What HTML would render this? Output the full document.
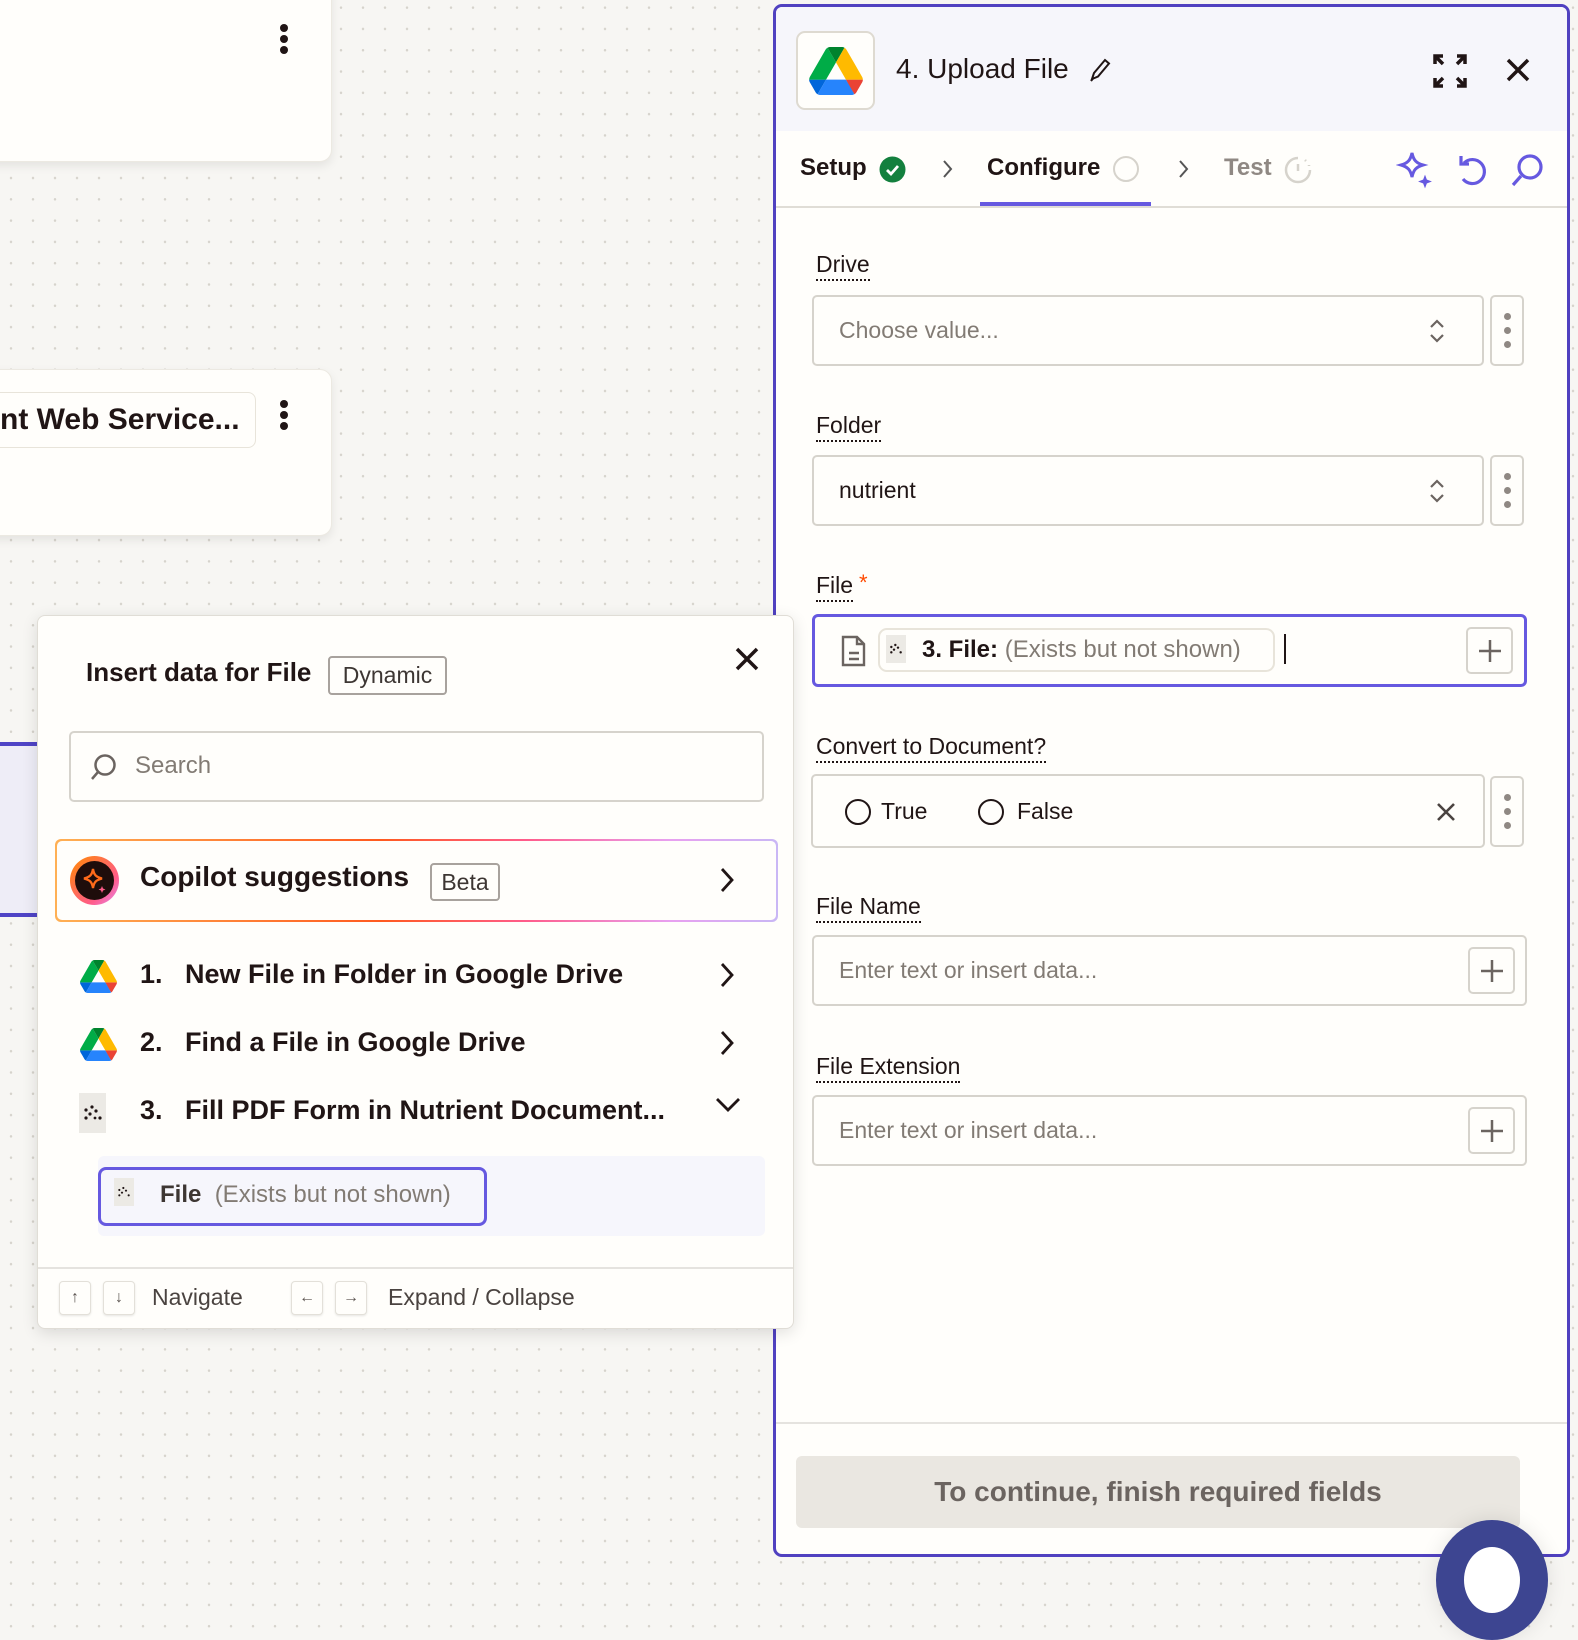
<!DOCTYPE html>
<html><head><meta charset="utf-8"><style>
*{box-sizing:border-box;margin:0;padding:0}
body{width:1578px;height:1586px;overflow:hidden;position:relative;font-family:"Liberation Sans",sans-serif;color:#201515;
background-color:#f7f6f3;background-image:radial-gradient(circle,#d6d3cc 1.1px,transparent 1.4px);background-size:22px 21.3px;background-position:0 -3px}
.a{position:absolute}
.card{position:absolute;background:#fffefb;border-radius:12px;box-shadow:0 4px 10px rgba(0,0,0,.08);border:1px solid #ece9e2}
.vdots{position:absolute;width:8px}
.vdots i{display:block;width:8px;height:8px;border-radius:50%;background:#201515;margin-bottom:3px}
.lbl{position:absolute;left:816px;font-size:23px;color:#201515;border-bottom:2px dotted #201515;line-height:27px;padding-bottom:1px}
.inp{position:absolute;left:816px;border:2px solid #d6d3cc;border-radius:5px;background:#fffefb;font-size:23px}
.ph{color:#827b74}
.kb{position:absolute;width:32px;height:34px;border:1.5px solid #e3e0d9;border-radius:4px;background:#fffefb;font-size:16px;text-align:center;line-height:32px;color:#5b5450;box-shadow:0 1px 2px rgba(0,0,0,.1)}
.mdots{position:absolute;width:34px;height:70px;border:2px solid #d6d3cc;border-radius:5px;background:#fffefb}
.mdots i{position:absolute;left:12px;width:7px;height:7px;border-radius:50%;background:#8f8883}
.plus{position:absolute;width:47px;height:47px;border:2px solid #d6d3cc;border-radius:5px;background:#fffefb}
.nut{display:inline-block;background:#eceae5;position:absolute}
</style></head><body>

<!-- canvas cards -->
<div class="card" style="left:-20px;top:-20px;width:352px;height:182px"></div>
<div class="vdots" style="left:280px;top:24px"><i></i><i></i><i></i></div>
<div class="card" style="left:-20px;top:369px;width:352px;height:167px"></div>
<div class="a" style="left:-40px;top:392px;width:296px;height:56px;border:1.5px solid #e8e4da;border-radius:8px;background:#fffefb"></div>
<div class="a" style="left:0;top:403px;font-size:30px;font-weight:bold;white-space:nowrap">nt Web Service...</div>
<div class="vdots" style="left:280px;top:400px"><i></i><i></i><i></i></div>
<div class="a" style="left:-20px;top:742px;width:70px;height:175px;border:4px solid #4f44c6;background:#eeedf7"></div>

<!-- right panel -->
<div class="a" style="left:773px;top:4px;width:797px;height:1553px;border:3.5px solid #5041c0;border-radius:9px;background:#fffefb;overflow:hidden">
 <div class="a" style="left:0;top:0;width:100%;height:124px;background:#f6f6fb"></div>
 <div class="a" style="left:20px;top:24px;width:79px;height:79px;border:2px solid #dedad1;border-radius:9px;background:#fffefb"></div>
 <svg class="a" style="left:33px;top:40px" width="54" height="48" viewBox="0 0 87.3 78"><path d="m6.6 66.85 3.85 6.65c.8 1.4 1.95 2.5 3.3 3.3l13.75-23.8h-27.5c0 1.550.4 3.1 1.2 4.5z" fill="#0066da"/><path d="m43.65 25-13.75-23.8c-1.35.8-2.5 1.9-3.3 3.3l-25.4 44a9.06 9.06 0 0 0 -1.2 4.5h27.5z" fill="#00ac47"/><path d="m73.55 76.8c1.35-.8 2.5-1.9 3.3-3.3l1.6-2.75 7.650-13.25c.8-1.4 1.2-2.95 1.2-4.5h-27.502l5.852 11.5z" fill="#ea4335"/><path d="m43.65 25 13.75-23.8c-1.35-.8-2.9-1.2-4.5-1.2h-18.5c-1.6 0-3.15.45-4.5 1.2z" fill="#00832d"/><path d="m59.8 53h-32.3l-13.75 23.8c1.35.8 2.9 1.2 4.5 1.2h50.8c1.6 0 3.15-.45 4.5-1.2z" fill="#2684fc"/><path d="m73.4 26.5-12.7-22c-.8-1.4-1.95-2.5-3.3-3.3l-13.75 23.8 16.15 28h27.45c0-1.55-.4-3.1-1.2-4.5z" fill="#ffba00"/></svg>
 <div class="a" style="left:120px;top:46px;font-size:28px">4. Upload File</div>
 <svg class="a" style="left:312px;top:50px" width="24" height="26" viewBox="0 0 24 26" fill="none" stroke="#201515" stroke-width="2"><path d="M4 22 6 16 17 3 21 6.5 10 19.5Z"/><path d="M5 21.5 3 24"/></svg>
 <svg class="a" style="left:656px;top:46px" width="36" height="36" viewBox="0 0 36 36" fill="none" stroke="#201515" stroke-width="3.5"><path d="M3 11V3h8M3 3l8 8M33 11V3h-8M33 3l-8 8M3 25v8h8M3 33l8-8M33 25v8h-8M33 33l-8-8"/></svg>
 <svg class="a" style="left:729px;top:50px" width="26" height="26" viewBox="0 0 26 26" stroke="#201515" stroke-width="3.5"><path d="M3 3 23 23M23 3 3 23"/></svg>

 <div class="a" style="left:24px;top:147px;font-size:24px;font-weight:bold">Setup</div>
 <svg class="a" style="left:103px;top:149px" width="27" height="27" viewBox="0 0 27 27"><circle cx="13.5" cy="13.5" r="13" fill="#13803e"/><path d="M8 14l4 4 7-8" stroke="#fff" stroke-width="2.8" fill="none"/></svg>
 <svg class="a" style="left:166px;top:152px" width="12" height="20" viewBox="0 0 12 20" fill="none" stroke="#555" stroke-width="2"><path d="M2 2l7 8-7 8"/></svg>
 <div class="a" style="left:211px;top:147px;font-size:24px;font-weight:bold">Configure</div>
 <div class="a" style="left:337px;top:149px;width:26px;height:26px;border:2.5px solid #d6d3cc;border-radius:50%"></div>
 <svg class="a" style="left:402px;top:152px" width="12" height="20" viewBox="0 0 12 20" fill="none" stroke="#555" stroke-width="2"><path d="M2 2l7 8-7 8"/></svg>
 <div class="a" style="left:448px;top:147px;font-size:24px;font-weight:bold;color:#8f8883">Test</div>
 <svg class="a" style="left:508px;top:149px" width="28" height="28" viewBox="0 0 28 28" fill="none" stroke="#d6d3cc" stroke-width="2.5"><path d="M14 2a12 12 0 1 0 12 12"/><path d="M14 8v7"/><path d="M21 4l1 1M25 9l0 1"/></svg>
 <div class="a" style="left:204px;top:195px;width:171px;height:4px;background:#6659e0"></div>
 <div class="a" style="left:0;top:199px;width:100%;height:2px;background:#e0ddd6"></div>
 <svg class="a" style="left:620px;top:143px" width="40" height="40" viewBox="0 0 40 40" fill="none" stroke="#6659e0" stroke-width="3"><path d="M16 3c1.5 7 4 10 11 12-7 2-9.5 5-11 12-1.5-7-4-10-11-12 7-2 9.5-5 11-12z"/><path d="M29 26l1.5 4 4 1.5-4 1.5-1.5 4-1.5-4-4-1.5 4-1.5z" fill="#6659e0" stroke-width="1"/></svg>
 <svg class="a" style="left:679px;top:145px" width="34" height="36" viewBox="0 0 34 36" fill="none" stroke="#6659e0" stroke-width="3.2"><path d="M9 11A12 12 0 1 1 8 27"/><path d="M3 4v8h8" transform="translate(3,0)"/></svg>
 <svg class="a" style="left:733px;top:146px" width="36" height="36" viewBox="0 0 36 36" fill="none" stroke="#6659e0" stroke-width="3.2"><circle cx="21" cy="14" r="11"/><path d="M12 23 4 32"/></svg>

 <div class="a" style="left:0;top:1415px;width:100%;height:2px;background:#e5e3df"></div>
 <div class="a" style="left:20px;top:1449px;width:724px;height:72px;background:#eae7e1;border-radius:6px;text-align:center;line-height:72px;font-size:28px;font-weight:bold;color:#6b6460">To continue, finish required fields</div>
</div>

<!-- form -->
<div class="lbl" style="top:251px">Drive</div>
<div class="inp" style="left:812px;top:295px;width:672px;height:71px"><span class="ph a" style="left:25px;top:20px">Choose value...</span>
<svg class="a" style="left:614px;top:20px" width="18" height="28" viewBox="0 0 18 28" fill="none" stroke="#6b6460" stroke-width="2.2"><path d="M3 10l6-6 6 6M3 18l6 6 6-6"/></svg></div>
<div class="mdots" style="left:1490px;top:295px;height:71px"><i style="top:16px"></i><i style="top:30px"></i><i style="top:44px"></i></div>

<div class="lbl" style="top:412px">Folder</div>
<div class="inp" style="left:812px;top:455px;width:672px;height:71px"><span class="a" style="left:25px;top:20px">nutrient</span>
<svg class="a" style="left:614px;top:20px" width="18" height="28" viewBox="0 0 18 28" fill="none" stroke="#6b6460" stroke-width="2.2"><path d="M3 10l6-6 6 6M3 18l6 6 6-6"/></svg></div>
<div class="mdots" style="left:1490px;top:455px;height:71px"><i style="top:16px"></i><i style="top:30px"></i><i style="top:44px"></i></div>

<div class="lbl" style="top:572px">File</div><div class="a" style="left:859px;top:570px;color:#ff4a00;font-size:22px">*</div>
<div class="a" style="left:812px;top:614px;width:715px;height:73px;border:3.5px solid #6659e0;border-radius:6px;background:#fffefb">
 <svg class="a" style="left:26px;top:18px" width="26" height="32" viewBox="0 0 26 32" fill="none" stroke="#6b6460" stroke-width="2.4"><path d="M2 2h14l7 7v21H2z"/><path d="M16 2v7h7M8 18h10M8 24h10"/></svg>
 <div class="a" style="left:63px;top:11px;width:397px;height:44px;border:2px solid #e8e4da;border-radius:9px;background:#fffefb"></div>
 <div class="nut" style="left:71px;top:18px;width:20px;height:28px"></div>
 <svg class="a" style="left:74px;top:26px" width="14" height="12" viewBox="0 0 20 18" fill="#201515"><circle cx="3" cy="6" r="1.8"/><circle cx="9" cy="3" r="1.8"/><circle cx="7" cy="10" r="1.8"/><circle cx="13" cy="7" r="1.8"/><circle cx="3" cy="14" r="1.8"/><circle cx="17" cy="14" r="1.8"/></svg>
 <div class="a" style="left:107px;top:19px;font-size:24px"><b>3. File:</b> <span style="color:#827b74">(Exists but not shown)</span></div>
 <div class="a" style="left:469px;top:17px;width:2px;height:30px;background:#201515"></div>
 <div class="plus" style="left:651px;top:10px"></div>
 <svg class="a" style="left:662px;top:21px" width="26" height="26" viewBox="0 0 26 26" stroke="#6b6460" stroke-width="2.5"><path d="M13 2v22M2 13h22"/></svg>
</div>

<div class="lbl" style="top:733px">Convert to Document?</div>
<div class="inp" style="left:811px;top:774px;width:674px;height:74px">
 <div class="a" style="left:32px;top:23px;width:26px;height:26px;border:2.5px solid #201515;border-radius:50%"></div>
 <span class="a" style="left:68px;top:22px">True</span>
 <div class="a" style="left:165px;top:23px;width:26px;height:26px;border:2.5px solid #201515;border-radius:50%"></div>
 <span class="a" style="left:204px;top:22px">False</span>
 <svg class="a" style="left:623px;top:26px" width="20" height="20" viewBox="0 0 20 20" stroke="#4a4340" stroke-width="2.6"><path d="M2 2l16 16M18 2 2 18"/></svg>
</div>
<div class="mdots" style="left:1490px;top:776px;height:71px"><i style="top:16px"></i><i style="top:30px"></i><i style="top:44px"></i></div>

<div class="lbl" style="top:893px">File Name</div>
<div class="inp" style="left:812px;top:935px;width:715px;height:71px"><span class="ph a" style="left:25px;top:20px">Enter text or insert data...</span>
<div class="plus" style="left:654px;top:10px"></div>
<svg class="a" style="left:665px;top:21px" width="26" height="26" viewBox="0 0 26 26" stroke="#6b6460" stroke-width="2.5"><path d="M13 2v22M2 13h22"/></svg></div>

<div class="lbl" style="top:1053px">File Extension</div>
<div class="inp" style="left:812px;top:1095px;width:715px;height:71px"><span class="ph a" style="left:25px;top:20px">Enter text or insert data...</span>
<div class="plus" style="left:654px;top:10px"></div>
<svg class="a" style="left:665px;top:21px" width="26" height="26" viewBox="0 0 26 26" stroke="#6b6460" stroke-width="2.5"><path d="M13 2v22M2 13h22"/></svg></div>

<!-- bottom right circle -->
<div class="a" style="left:1436px;top:1520px;width:112px;height:120px;border-radius:50%;background:#3d4591;box-shadow:0 0 20px rgba(0,0,0,.1)"></div>
<div class="a" style="left:1464px;top:1547px;width:56px;height:66px;border-radius:50%;background:#fff"></div>

<!-- popup -->
<div class="a" style="left:37px;top:615px;width:757px;height:714px;background:#fffefb;border:1.5px solid #e0ddd6;border-radius:8px;box-shadow:0 4px 16px rgba(0,0,0,.12)">
 <div class="a" style="left:48px;top:41px;font-size:26px;font-weight:bold;color:#201515">Insert data for File</div>
 <div class="a" style="left:290px;top:40px;width:119px;height:39px;border:2px solid #a8a29d;border-radius:4px;font-size:23px;line-height:35px;text-align:center;color:#3d3633">Dynamic</div>
 <svg class="a" style="left:697px;top:31px" width="24" height="24" viewBox="0 0 24 24" stroke="#201515" stroke-width="3.5"><path d="M2 2l20 20M22 2 2 22"/></svg>
 <div class="a" style="left:31px;top:115px;width:695px;height:71px;border:2px solid #d6d3cc;border-radius:5px"></div>
 <svg class="a" style="left:50px;top:137px" width="30" height="30" viewBox="0 0 30 30" fill="none" stroke="#6b6460" stroke-width="2.5"><circle cx="17" cy="12" r="9.5"/><path d="M10 19 4 26"/></svg>
 <div class="a" style="left:97px;top:136px;font-size:24px;color:#827b74">Search</div>

 <div class="a" style="left:17px;top:223px;width:723px;height:83px;border-radius:6px;padding:2px;background:linear-gradient(90deg,#ffb054,#ff5a1f 45%,#ff5c8a 65%,#e8a0f0 85%,#c9b7f5)">
  <div style="width:100%;height:100%;background:#fffefb;border-radius:5px"></div></div>
 <div class="a" style="left:32px;top:240px;width:49px;height:49px;border-radius:50%;background:linear-gradient(135deg,#ff8a00,#ff5c8a 70%,#e38cf3)"></div>
 <div class="a" style="left:37px;top:245px;width:39px;height:39px;border-radius:50%;background:#1e0d0b"></div>
 <svg class="a" style="left:42px;top:250px" width="30" height="30" viewBox="0 0 30 30" fill="none" stroke="#ff6a1a" stroke-width="2.3"><path d="M13 3c1 6 3 8 9 9.5-6 1.5-8 3.5-9 9.5-1-6-3-8-9-9.5 6-1.5 8-3.5 9-9.5z"/><path d="M22 20l1 2.5 2.5 1-2.5 1-1 2.5-1-2.5-2.5-1 2.5-1z" fill="#ff5c8a" stroke="none"/></svg>
 <div class="a" style="left:102px;top:245px;font-size:28px;font-weight:bold;color:#201515">Copilot suggestions</div>
 <div class="a" style="left:392px;top:247px;width:70px;height:38px;border:2px solid #a8a29d;border-radius:4px;font-size:23px;line-height:34px;text-align:center;color:#3d3633">Beta</div>
 <svg class="a" style="left:681px;top:250px" width="16" height="28" viewBox="0 0 16 28" fill="none" stroke="#201515" stroke-width="2.8"><path d="M3 3l10 11-10 11"/></svg>

 <svg class="a" style="left:42px;top:344px" width="37" height="33" viewBox="0 0 87.3 78"><path d="m6.6 66.85 3.85 6.65c.8 1.4 1.95 2.5 3.3 3.3l13.75-23.8h-27.5c0 1.55.4 3.1 1.2 4.5z" fill="#0066da"/><path d="m43.65 25-13.75-23.8c-1.35.8-2.5 1.9-3.3 3.3l-25.4 44a9.06 9.06 0 0 0 -1.2 4.5h27.5z" fill="#00ac47"/><path d="m73.55 76.8c1.35-.8 2.5-1.9 3.3-3.3l1.6-2.75 7.65-13.25c.8-1.4 1.2-2.95 1.2-4.5h-27.502l5.852 11.5z" fill="#ea4335"/><path d="m43.65 25 13.75-23.8c-1.35-.8-2.9-1.2-4.5-1.2h-18.5c-1.6 0-3.15.45-4.5 1.2z" fill="#00832d"/><path d="m59.8 53h-32.3l-13.75 23.8c1.35.8 2.9 1.2 4.5 1.2h50.8c1.6 0 3.15-.45 4.5-1.2z" fill="#2684fc"/><path d="m73.4 26.5-12.7-22c-.8-1.4-1.95-2.5-3.3-3.3l-13.75 23.8 16.150 28h27.45c0-1.55-.4-3.1-1.2-4.5z" fill="#ffba00"/></svg>
 <div class="a" style="left:102px;top:343px;font-size:27px;font-weight:bold;color:#201515">1.&nbsp;&nbsp;&nbsp;New File in Folder in Google Drive</div>
 <svg class="a" style="left:681px;top:345px" width="16" height="28" viewBox="0 0 16 28" fill="none" stroke="#201515" stroke-width="2.8"><path d="M3 3l10 11-10 11"/></svg>

 <svg class="a" style="left:42px;top:412px" width="37" height="33" viewBox="0 0 87.3 78"><path d="m6.6 66.85 3.85 6.65c.8 1.4 1.95 2.5 3.3 3.3l13.75-23.8h-27.5c0 1.55.4 3.1 1.2 4.5z" fill="#0066da"/><path d="m43.65 25-13.75-23.8c-1.35.8-2.5 1.9-3.3 3.3l-25.4 44a9.06 9.06 0 0 0 -1.2 4.5h27.5z" fill="#00ac47"/><path d="m73.55 76.8c1.35-.8 2.5-1.9 3.3-3.3l1.6-2.75 7.65-13.25c.8-1.4 1.2-2.95 1.2-4.5h-27.502l5.852 11.5z" fill="#ea4335"/><path d="m43.65 25 13.75-23.8c-1.35-.8-2.9-1.2-4.5-1.2h-18.5c-1.6 0-3.15.45-4.5 1.2z" fill="#00832d"/><path d="m59.8 53h-32.3l-13.75 23.8c1.35.8 2.9 1.2 4.5 1.2h50.8c1.6 0 3.15-.45 4.5-1.2z" fill="#2684fc"/><path d="m73.4 26.5-12.7-22c-.8-1.4-1.95-2.5-3.3-3.3l-13.75 23.8 16.15 28h27.45c0-1.55-.4-3.1-1.2-4.5z" fill="#ffba00"/></svg>
 <div class="a" style="left:102px;top:411px;font-size:27px;font-weight:bold;color:#201515">2.&nbsp;&nbsp;&nbsp;Find a File in Google Drive</div>
 <svg class="a" style="left:681px;top:413px" width="16" height="28" viewBox="0 0 16 28" fill="none" stroke="#201515" stroke-width="2.8"><path d="M3 3l10 11-10 11"/></svg>

 <div class="nut" style="left:41px;top:477px;width:27px;height:40px"></div>
 <svg class="a" style="left:45px;top:488px" width="20" height="18" viewBox="0 0 20 18" fill="#201515"><circle cx="3" cy="6" r="1.6"/><circle cx="9" cy="3" r="1.6"/><circle cx="7" cy="10" r="1.6"/><circle cx="13" cy="7" r="1.6"/><circle cx="3" cy="14" r="1.6"/><circle cx="17" cy="14" r="1.6"/><circle cx="12" cy="14" r="1.4"/></svg>
 <div class="a" style="left:102px;top:479px;font-size:27px;font-weight:bold;color:#201515">3.&nbsp;&nbsp;&nbsp;Fill PDF Form in Nutrient Document...</div>
 <svg class="a" style="left:676px;top:480px" width="28" height="18" viewBox="0 0 28 18" fill="none" stroke="#201515" stroke-width="2.8"><path d="M3 3l11 11 11-11"/></svg>

 <div class="a" style="left:60px;top:540px;width:667px;height:80px;background:#f6f6fc;border-radius:6px"></div>
 <div class="a" style="left:60px;top:551px;width:389px;height:59px;border:3.5px solid #6659e0;border-radius:8px;background:#f6f6fc"></div>
 <div class="nut" style="left:76px;top:562px;width:20px;height:28px"></div>
 <svg class="a" style="left:79px;top:570px" width="14" height="12" viewBox="0 0 20 18" fill="#201515"><circle cx="3" cy="6" r="1.6"/><circle cx="9" cy="3" r="1.6"/><circle cx="7" cy="10" r="1.6"/><circle cx="13" cy="7" r="1.6"/><circle cx="3" cy="14" r="1.6"/><circle cx="17" cy="14" r="1.6"/></svg>
 <div class="a" style="left:122px;top:565px;font-size:24px;color:#3d3633"><b>File</b>&nbsp; <span style="color:#827b74">(Exists but not shown)</span></div>

 <div class="a" style="left:0;top:651px;width:100%;height:2px;background:#e5e3df"></div>
 <div class="kb" style="left:21px;top:665px">↑</div>
 <div class="kb" style="left:65px;top:665px">↓</div>
 <div class="a" style="left:114px;top:668px;font-size:23px;color:#4a4340">Navigate</div>
 <div class="kb" style="left:253px;top:665px">←</div>
 <div class="kb" style="left:297px;top:665px">→</div>
 <div class="a" style="left:350px;top:668px;font-size:23px;color:#4a4340">Expand / Collapse</div>
</div>
</body></html>
